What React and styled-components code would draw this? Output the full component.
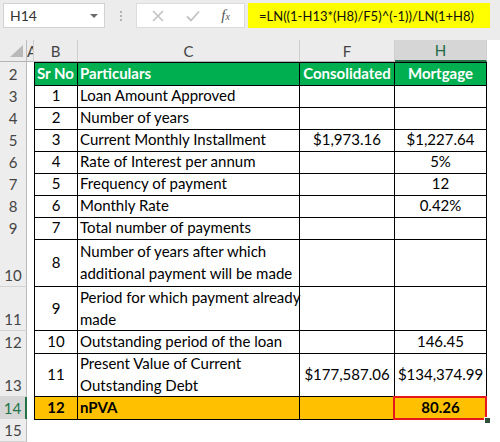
import React from 'react';
import styled, { createGlobalStyle } from 'styled-components';

const COLS = '27px 7px 44px 222px 95px 92px 1fr';

const GlobalStyle = createGlobalStyle`
  html, body {
    margin: 0;
    padding: 0;
    background: #ffffff;
  }
  body {
    font-family: Lato, 'Liberation Sans', sans-serif;
  }
`;

const Page = styled.div`
  width: 500px;
  height: 442px;
  overflow: hidden;
  background: #ffffff;
`;

const FormulaBar = styled.div`
  display: flex;
  align-items: flex-start;
  height: 40px;
  padding: 3px 0 0 3px;
  box-sizing: border-box;
  background: #ececec;
`;

const NameBox = styled.div`
  width: 102px;
  height: 25px;
  box-sizing: border-box;
  background: #fff;
  border: 1px solid #d2d2d2;
  display: flex;
  align-items: center;
  justify-content: space-between;
  padding: 0 6px 0 6px;
  font-size: 14px;
  color: #333;
`;

const DropArrow = styled.span`
  width: 0;
  height: 0;
  border-left: 4px solid transparent;
  border-right: 4px solid transparent;
  border-top: 4px solid #6b6b6b;
`;

const Grip = styled.div`
  width: 31px;
  height: 25px;
  display: flex;
  flex-direction: column;
  align-items: center;
  justify-content: center;
  gap: 2px;

  span {
    width: 2px;
    height: 2px;
    background: #b4b4b4;
  }
`;

const FuncBox = styled.div`
  width: 109px;
  height: 25px;
  box-sizing: border-box;
  background: #fff;
  border: 1px solid #dcdcdc;
  display: flex;
  align-items: center;
  justify-content: space-around;
  padding: 0 4px;
  color: #bdbdbd;
`;

const Fx = styled.span`
  font-family: 'Liberation Serif', serif;
  font-style: italic;
  font-size: 15px;
  color: #555;

  small {
    font-size: 10px;
  }
`;

const FormulaText = styled.div`
  margin-left: 3px;
  width: 242px;
  height: 25px;
  box-sizing: border-box;
  background: #ffff00;
  display: flex;
  align-items: center;
  padding-left: 11px;
  font-size: 13px;
  color: #111;
  white-space: nowrap;
  overflow: hidden;
`;

const HeadRow = styled.div`
  display: grid;
  grid-template-columns: ${COLS};
  height: 22px;
  background: #ececec;
`;

const ColHead = styled.div`
  box-sizing: border-box;
  overflow: hidden;
  display: flex;
  align-items: center;
  justify-content: ${p => (p.$narrow ? 'flex-start' : 'center')};
  font-size: 15px;
  color: ${p => (p.$active ? '#1f6b43' : '#444')};
  background: ${p => (p.$active ? '#d6d6d6' : p.$blank ? '#ffffff' : 'transparent')};
  border-right: ${p => (p.$blank ? 'none' : '1px solid #cfcfcf')};
  border-bottom: ${p => (p.$active ? '2px solid #217346' : p.$blank ? 'none' : '1px solid #b5b5b5')};
`;

const Corner = styled.div`
  box-sizing: border-box;
  border-right: 1px solid #bdbdbd;
  border-bottom: 1px solid #b5b5b5;
  display: flex;
  align-items: flex-end;
  justify-content: flex-end;
  padding: 0 3px 4px 0;

  span {
    width: 0;
    height: 0;
    border-left: 13px solid transparent;
    border-bottom: 12px solid #b9b9b9;
  }
`;

const SheetRow = styled.div`
  display: grid;
  grid-template-columns: ${COLS};
  height: ${p => p.$h}px;
`;

const RowHead = styled.div`
  box-sizing: border-box;
  display: flex;
  align-items: flex-end;
  justify-content: center;
  line-height: 21px;
  font-size: 15px;
  color: ${p => (p.$active ? '#217346' : '#444')};
  background: ${p => (p.$active ? '#d6d6d6' : '#ededed')};
  border-right: ${p => (p.$active ? '2px solid #217346' : '1px solid #bdbdbd')};
  border-bottom: 1px solid #d4d4d4;
`;

const Blank = styled.div``;

const Cell = styled.div`
  position: relative;
  box-sizing: border-box;
  display: flex;
  align-items: center;
  justify-content: ${p => (p.$left ? 'flex-start' : 'center')};
  padding: 0 ${p => (p.$left ? '2px' : '0')};
  font-size: 15px;
  line-height: 21.5px;
  white-space: nowrap;
  font-weight: ${p => (p.$bold ? 700 : 400)};
  color: ${p => (p.$light ? '#ffffff' : '#000000')};
  background: ${p => p.$bg || 'transparent'};
  border-right: 1px solid #000;
  border-bottom: 1px solid #000;
  border-top: ${p => (p.$top ? '1px solid #000' : 'none')};
  border-left: ${p => (p.$first ? '1px solid #000' : 'none')};
`;

const SelectBox = styled.span`
  position: absolute;
  top: -1px;
  left: -2px;
  right: -1px;
  bottom: -1px;
  border: 2px solid #e3171d;
  pointer-events: none;
`;

const FillHandle = styled.span`
  position: absolute;
  right: -4px;
  bottom: -4px;
  width: 5px;
  height: 5px;
  background: #2f4f3a;
  border: 1px solid #fff;
  border-width: 1px 0 0 1px;
`;

const rows = [
  { n: 2, h: 23, head: true, b: 'Sr No', c: ['Particulars'], f: 'Consolidated', m: 'Mortgage' },
  { n: 3, b: '1', c: ['Loan Amount Approved'] },
  { n: 4, b: '2', c: ['Number of years'] },
  { n: 5, b: '3', c: ['Current Monthly Installment'], f: '$1,973.16', m: '$1,227.64' },
  { n: 6, b: '4', c: ['Rate of Interest per annum'], m: '5%' },
  { n: 7, b: '5', c: ['Frequency of payment'], m: '12' },
  { n: 8, b: '6', c: ['Monthly Rate'], m: '0.42%' },
  { n: 9, b: '7', c: ['Total number of payments'] },
  { n: 10, h: 48, b: '8', c: ['Number of years after which', 'additional payment will be made'] },
  { n: 11, h: 44, b: '9', c: ['Period for which payment already', 'made'] },
  { n: 12, b: '10', c: ['Outstanding period of the loan'], m: '146.45' },
  { n: 13, h: 44, b: '11', c: ['Present Value of Current', 'Outstanding Debt'], f: '$177,587.06', m: '$134,374.99' },
  { n: 14, total: true, b: '12', c: ['nPVA'], m: '80.26' },
];

const Lines = ({ lines }) => (
  <div>
    {lines.map((l, i) => (
      <div key={i}>{l}</div>
    ))}
  </div>
);

const App = () => {
  return (
    <Page>
      <GlobalStyle />
      <FormulaBar>
        <NameBox>
          <span>H14</span>
          <DropArrow />
        </NameBox>
        <Grip>
          <span />
          <span />
          <span />
        </Grip>
        <FuncBox>
          <svg width="14" height="14" viewBox="0 0 14 14">
            <path d="M2 2 L12 12 M12 2 L2 12" stroke="#c2c2c2" strokeWidth="1.6" fill="none" />
          </svg>
          <svg width="16" height="14" viewBox="0 0 16 14">
            <path d="M2 7.5 L6 11.5 L14 2.5" stroke="#c2c2c2" strokeWidth="1.8" fill="none" />
          </svg>
          <Fx>
            f<small>x</small>
          </Fx>
        </FuncBox>
        <FormulaText>=LN((1-H13*(H8)/F5)^(-1))/LN(1+H8)</FormulaText>
      </FormulaBar>

      <HeadRow>
        <Corner>
          <span />
        </Corner>
        <ColHead $narrow>A</ColHead>
        <ColHead>B</ColHead>
        <ColHead>C</ColHead>
        <ColHead>F</ColHead>
        <ColHead $active>H</ColHead>
        <ColHead $blank />
      </HeadRow>

      {rows.map(r => {
        const bg = r.head ? '#00b050' : r.total ? '#ffc000' : undefined;
        const bold = r.head || r.total;
        return (
          <SheetRow key={r.n} $h={r.h || 22}>
            <RowHead $active={r.total}>{r.n}</RowHead>
            <Blank />
            <Cell $first $top={r.head} $bg={bg} $bold={bold} $light={r.head} $left={r.head}>
              {r.b}
            </Cell>
            <Cell $left $top={r.head} $bg={bg} $bold={bold} $light={r.head}>
              <Lines lines={r.c} />
            </Cell>
            <Cell $top={r.head} $bg={bg} $bold={bold} $light={r.head}>
              {r.f}
            </Cell>
            <Cell $top={r.head} $bg={bg} $bold={bold} $light={r.head}>
              {r.m}
              {r.total && (
                <>
                  <SelectBox />
                  <FillHandle />
                </>
              )}
            </Cell>
            <Blank />
          </SheetRow>
        );
      })}
      <SheetRow $h={23}>
        <RowHead>15</RowHead>
      </SheetRow>
    </Page>
  );
};

export default App;
